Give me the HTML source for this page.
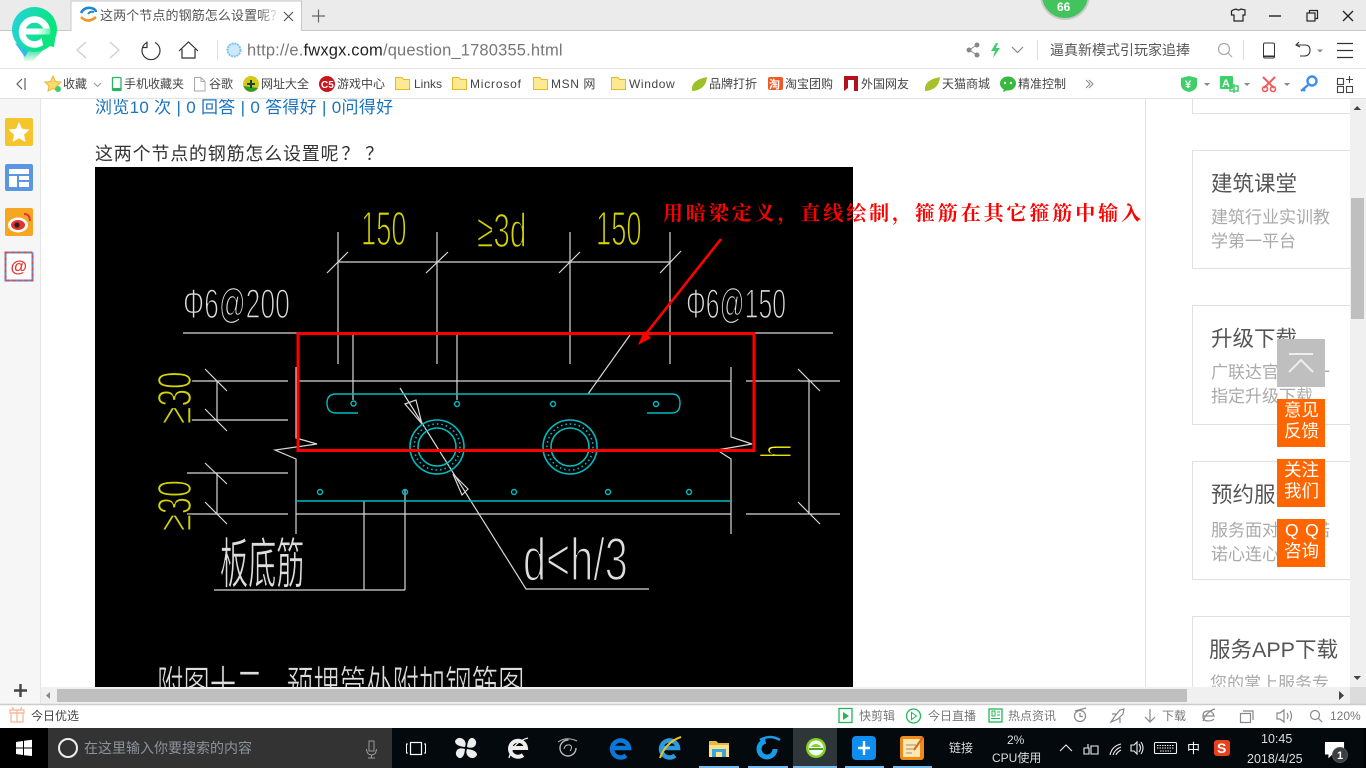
<!DOCTYPE html>
<html lang="zh-CN">
<head>
<meta charset="utf-8">
<title>这两个节点的钢筋怎么设置呢？？</title>
<style>
html,body{margin:0;padding:0;width:1366px;height:768px;overflow:hidden;background:#fff}
svg{display:block;position:absolute;left:0;top:0}
text{font-family:"Liberation Sans","Noto Sans CJK SC",sans-serif;white-space:pre}
.b text{font-size:12px;fill:#444}
.cad{font-family:"Liberation Sans","Noto Sans CJK SC",sans-serif;stroke:#000}
.w{stroke:#d8d8d8;stroke-width:1.2;fill:none}
.c{stroke:#00bcc0;stroke-width:1.4;fill:none}
.i{fill:none;stroke:#444;stroke-width:1.2}
.g{fill:none;stroke:#888;stroke-width:1.2}
.ct{font-size:21.5px;fill:#555}
.cd{font-size:17px;fill:#aaa}
.fl{font-size:17.5px;fill:#fff}
</style>
</head>
<body>
<svg width="1366" height="768" viewBox="0 0 1366 768" xmlns="http://www.w3.org/2000/svg">
<defs>
<linearGradient id="lg" x1="0" y1="0" x2="1" y2="0.3"><stop offset="0" stop-color="#27d2e0"/><stop offset="1" stop-color="#06e676"/></linearGradient>
<linearGradient id="bar" x1="0" y1="0" x2="1" y2="0"><stop offset="0" stop-color="#fff"/><stop offset=".55" stop-color="#fff"/><stop offset="1" stop-color="#5ff0b0"/></linearGradient>
<linearGradient id="tl" x1="0" y1="0" x2="0" y2="1"><stop offset="0" stop-color="#14d88c"/><stop offset="1" stop-color="#e6fbef"/></linearGradient>
<linearGradient id="fade" x1="0" y1="0" x2="1" y2="0"><stop offset="0" stop-color="#fff" stop-opacity="0"/><stop offset="1" stop-color="#fff"/></linearGradient>
<clipPath id="img"><rect x="95" y="167" width="758" height="520"/></clipPath>
</defs>

<!-- page -->
<rect width="1366" height="768" fill="#fff"/>
<text x="95" y="113" font-size="17" fill="#1b74bd" letter-spacing=".3">浏览10 次 | 0 回答 | 0 答得好 | 0问得好</text>
<text x="95" y="160" font-size="18" fill="#333" letter-spacing=".8">这两个节点的钢筋怎么设置呢<tspan dx="2">？</tspan><tspan dx="5">？</tspan></text>

<!-- CAD drawing -->
<rect x="95" y="167" width="758" height="520" fill="#000"/>
<g clip-path="url(#img)">
<g class="w">
<path d="M338 232V364M437 232V364M570 232V364M670 232V364M338 262H670"/>
<path d="M327 273L348 252M426 273L448 252M559 273L580 252M660 273L681 251"/>
<path d="M183 333H298M754 333H833M353 333V400M457 333V400"/>
<path d="M187 381H288M296 381H731M746 381H840M187 420H288M187 473H288M187 514H288M296 514H731M746 514H840"/>
<path d="M296 367V438L317 444L275 450L296 459V534M731 367V437L752 444L717 450L731 459V534"/>
<path d="M217 381V420M205 369L227 391M205 409L227 431M217 473V514M205 463L227 484M205 502L227 524"/>
<path d="M809 381V514M798 369L820 391M798 502L820 524"/>
<path d="M364 501V590M405 490V590M214 590H405"/>
<path d="M588 394L630 335"/>
<path d="M400 388L526 589H649"/>
<path d="M405 404L416 400L422 424ZM453 474L468 489L462 495Z"/>
</g>
<g class="c">
<path d="M358 413H336Q327 413 327 403Q327 394 336 394H672Q680 394 680 403Q680 413 672 413H647"/>
<circle cx="353.500" cy="403.500" r="2.500"/><circle cx="457" cy="404" r="2.500"/><circle cx="553" cy="404" r="2.500"/><circle cx="656" cy="404" r="2.500"/>
<circle cx="320" cy="492" r="2.500"/><circle cx="405" cy="492" r="2.500"/><circle cx="514" cy="492" r="2.500"/><circle cx="608" cy="492" r="2.500"/><circle cx="689" cy="492" r="2.500"/>
<circle cx="437" cy="447" r="27" stroke-width="1.600"/><circle cx="437" cy="447" r="19" stroke-width="1.600"/><circle cx="437" cy="447" r="23" stroke-width="1.600" stroke-dasharray="1.500 3"/>
<circle cx="570" cy="447" r="27" stroke-width="1.600"/><circle cx="570" cy="447" r="19" stroke-width="1.600"/><circle cx="570" cy="447" r="23" stroke-width="1.600" stroke-dasharray="1.500 3"/>
<path d="M296 501H731"/>
</g>
<g fill="#d4d400" class="cad" stroke-width="1.500" font-size="48">
<text class="cad" transform="translate(361,245) scale(.57,1)">150</text>
<text class="cad" transform="translate(596,245) scale(.57,1)">150</text>
<text class="cad" transform="translate(477,247) scale(.62,1)">≥3d</text>
<text class="cad" transform="translate(191,424) rotate(-90) scale(.66,1)">≥30</text>
<text class="cad" transform="translate(191,531) rotate(-90) scale(.64,1)">≥30</text>
<text class="cad" transform="translate(791,458) rotate(-90) scale(.55,1)" font-size="44" fill="#ffff00">h</text>
</g>
<g fill="#ddd" class="cad" stroke-width="1.500">
<text class="cad" transform="translate(183,318) scale(.63,1)" font-size="42">Φ6@200</text>
<text class="cad" transform="translate(686,318) scale(.59,1)" font-size="42">Φ6@150</text>
<text class="cad" transform="translate(523,580) scale(.69,1)" font-size="60" stroke-width="1.800">d&lt;h/3</text>
<text class="cad" transform="translate(220,583) scale(.88,1.7)" font-size="32" stroke-width=".5">板底筋</text>
<text class="cad" transform="translate(157,701) scale(1,1.6)" font-size="26.400" stroke-width=".5" word-spacing="17">附图十二 预埋管处附加钢筋图</text>
</g>
</g>
<rect x="298" y="333.500" width="456" height="117" fill="none" stroke="#f00" stroke-width="3"/>
<path d="M721 239L645 335" stroke="#f00" stroke-width="2.600" fill="none"/>
<path d="M638 345L644 331L651 338Z" fill="#f00"/>
<text x="663" y="220" font-size="20" font-weight="700" fill="#f00" letter-spacing="2.900" style="font-family:'Noto Serif CJK SC','Liberation Serif',serif">用暗梁定义，直线绘制，箍筋在其它箍筋中输入</text>

<!-- right column -->
<path d="M1145.500 99V687" stroke="#e4e4e4"/>
<g fill="#fff" stroke="#e0e0e0">
<path d="M1192.500 99V113.500H1350"/>
<path d="M1350 150.500H1192.500V268.500H1350"/>
<path d="M1350 305.500H1192.500V424.500H1350"/>
<path d="M1350 461.500H1192.500V579.500H1350"/>
<path d="M1350 616.500H1192.500V700H1350"/>
</g>
<text class="ct" x="1211" y="191">建筑课堂</text>
<text class="cd" x="1211" y="223">建筑行业实训教</text>
<text class="cd" x="1211" y="247">学第一平台</text>
<text class="ct" x="1211" y="346">升级下载</text>
<text class="cd" x="1211" y="378">广联达官方唯一</text>
<text class="cd" x="1211" y="402">指定升级下载</text>
<text class="ct" x="1211" y="502">预约服务</text>
<text class="cd" x="1211" y="536">服务面对面承诺</text>
<text class="cd" x="1211" y="560">诺心连心服务</text>
<text class="ct" x="1209" y="657">服务APP下载</text>
<text class="cd" x="1210" y="689">您的掌上服务专</text>

<!-- floating buttons -->
<rect x="1277" y="339" width="48" height="48" fill="#bfbfbf"/>
<path d="M1289 354H1313M1289 372L1301 360L1313 372" stroke="#eee" stroke-width="2" fill="none"/>
<rect x="1277" y="399" width="48" height="48" fill="#f60"/>
<rect x="1277" y="459" width="48" height="48" fill="#f60"/>
<rect x="1277" y="519" width="48" height="48" fill="#f60"/>
<text class="fl" x="1284" y="416">意见</text><text class="fl" x="1284" y="437">反馈</text>
<text class="fl" x="1284" y="476">关注</text><text class="fl" x="1284" y="497">我们</text>
<text class="fl" x="1285" y="536" letter-spacing="6.500">QQ</text><text class="fl" x="1284" y="557">咨询</text>

<!-- scrollbars -->
<rect x="1350" y="99" width="16" height="588" fill="#f0f0f0"/>
<rect x="1351" y="198" width="13" height="121" fill="#bfbfbf"/>
<path d="M1353.500 110H1361L1357.200 106Z" fill="#444"/>
<path d="M1353.500 676H1361L1357.200 680Z" fill="#444"/>
<rect x="40" y="687" width="1310" height="17" fill="#f0f0f0"/>
<rect x="57" y="689" width="1130" height="13" fill="#bfbfbf"/>
<path d="M50 692V699L46 695.500Z" fill="#888"/>
<path d="M1339 691V700L1344 695.500Z" fill="#444"/>
<rect x="1350" y="687" width="16" height="17" fill="#dcdcdc"/>

<!-- left sidebar -->
<rect x="0" y="99" width="40" height="605" fill="#f5f6f5"/>
<path d="M40.500 99V704" stroke="#e4e4e4"/>
<rect x="5" y="118" width="28" height="28" rx="2" fill="#f5c52d"/>
<path d="M19 122L22 128.800L29.500 129.600L24 134.600L25.500 142L19 138.300L12.500 142L14 134.600L8.500 129.600L16 128.800Z" fill="#fff"/>
<rect x="5" y="164" width="28" height="27" rx="2" fill="#5a97e2"/>
<path d="M9 169H29V174H9ZM9 176H17V187H9ZM19 176H29V180H19ZM19 182H29V187H19Z" fill="#fff"/>
<rect x="5" y="208" width="28" height="28" rx="2" fill="#f5a623"/>
<ellipse cx="18" cy="225" rx="10" ry="7.500" fill="#fff"/>
<ellipse cx="18" cy="225" rx="7" ry="5" fill="#e6322e"/>
<circle cx="17" cy="225" r="2.600" fill="#222"/>
<path d="M24 214Q30 214 30 221" stroke="#e6322e" stroke-width="2" fill="none"/>
<rect x="5.500" y="252.500" width="27" height="28" fill="#fff"/>
<rect x="5.500" y="252.500" width="27" height="28" fill="none" stroke="#e64a3c" stroke-width="2" stroke-dasharray="3 3"/>
<rect x="5.500" y="252.500" width="27" height="28" fill="none" stroke="#4a90e2" stroke-width="2" stroke-dasharray="3 3" stroke-dashoffset="3"/>
<text x="10.500" y="272" font-size="17" font-weight="700" fill="#e6322e">@</text>
<rect x="0" y="680" width="40" height="24" fill="#f5f6f5"/>
<path d="M40.500 680V704" stroke="#e4e4e4"/>
<path d="M14 690.500H27M20.500 684V697" stroke="#444" stroke-width="2.400"/>

<!-- status bar -->
<rect x="0" y="704" width="1366" height="24" fill="#fff"/>
<path d="M0 704.500H1366" stroke="#ccc" stroke-width="1.500"/>
<g fill="none" stroke="#f3b596" stroke-width="1.200"><rect x="11" y="713" width="12" height="9"/><path d="M10 710H24V713H10ZM17 710V722M14 710L12 707M20 710L22 707"/></g>
<text x="31" y="720" font-size="12" fill="#444">今日优选</text>
<g fill="none" stroke="#1db954" stroke-width="1.300">
<rect x="839" y="708.500" width="13" height="14" />
<circle cx="913.500" cy="716" r="7"/>
<rect x="989" y="709" width="13" height="13"/>
</g>
<path d="M843 712L849 716L843 720Z" fill="#1db954"/>
<path d="M911.500 712.500L916.500 716L911.500 719.500Z" fill="none" stroke="#1db954"/>
<path d="M992 711V716H995V711ZM997 712H1000M997 715H1000M991 718.500H1000" stroke="#1db954" fill="none"/>
<g font-size="12" fill="#777">
<text x="859" y="720">快剪辑</text><text x="928" y="720">今日直播</text><text x="1008" y="720">热点资讯</text><text x="1162" y="720">下载</text><text x="1330" y="720">120%</text>
</g>
<g class="g" stroke="#777">
<circle cx="1080" cy="716" r="5.500"/><path d="M1080 713V716.500H1083M1075 711L1086 708"/>
<path d="M1111 722L1115 716L1120 710L1124 709L1123 714L1118 719ZM1112 714L1117 714M1120 718V723"/>
<path d="M1150 709V722M1145 717L1150 722L1155 717"/>
<path d="M1203 716H1214Q1213 711 1208 711Q1203 711 1203 716T1208 721Q1212 721 1214 719M1203 721Q1207 711 1215 709"/>
<rect x="1240.500" y="713.500" width="10" height="9"/><path d="M1243 711H1253V720"/>
<path d="M1277 713H1280L1284 710V722L1280 719H1277ZM1287 713Q1289 716 1287 719M1290 711Q1293 716 1290 721"/>
<circle cx="1315" cy="715" r="4.500"/><path d="M1318.500 718.500L1322 722"/>
</g>

<!-- tab bar -->
<rect x="0" y="0" width="1366" height="31" fill="#ebebeb"/>
<path d="M0 30.500H71M301 30.500H1366" stroke="#c8c8c8"/>
<path d="M71 31V1H301.500V31" fill="#fff" stroke="#c8c8c8"/>
<path d="M81 13Q84 7 91 8Q96 9 96 12" stroke="#1e88d2" stroke-width="2.600" fill="none"/>
<path d="M88 14Q90 11 94 12" stroke="#1e88d2" stroke-width="2" fill="none"/>
<path d="M81 17Q88 24 96 17" stroke="#f0952a" stroke-width="2.600" fill="none"/>
<text x="100" y="20" font-size="13" fill="#555" letter-spacing=".1">这两个节点的钢筋怎么设置呢？？</text>
<rect x="260" y="5" width="20" height="20" fill="url(#fade)"/>
<rect x="278" y="5" width="20" height="20" fill="#fff"/>
<path d="M284 12L293 21M293 12L284 21" stroke="#555" stroke-width="1.200"/>
<path d="M312 16H325M318.500 9.500V22.500" stroke="#666" stroke-width="1.200"/>

<!-- window controls -->
<circle cx="1065" cy="-5" r="24" fill="#44c35c" stroke="#c9c9c9" stroke-width="2"/>
<text x="1057" y="11" font-size="12" font-weight="700" fill="#fff">66</text>
<g fill="none" stroke="#222" stroke-width="1.200">
<path d="M1233 10L1236 9Q1238.500 11 1241 9L1245 10V15H1243V21H1234V15H1231.500V11Z"/>
<path d="M1269 16H1281" stroke-width="1.400"/>
<rect x="1307" y="13" width="8" height="8"/><path d="M1309.500 13V10.500H1317.500V18.500H1315"/>
<path d="M1343 11L1353 21M1353 11L1343 21" stroke-width="1.300"/>
</g>

<!-- toolbar -->
<rect x="0" y="31" width="1366" height="37" fill="#fff"/>
<path d="M0 68.500H1366" stroke="#e2e2e2"/>
<path d="M86 42L77 50L86 58M110 42L119 50L110 58" fill="none" stroke="#ccc" stroke-width="1.200"/>
<path d="M147 42A9 9 0 1 0 155 42M147 41V47H142" fill="none" stroke="#333" stroke-width="1.200" transform="translate(0,.5)"/>
<path d="M179 51L188.500 42L198 51M182 49V58H195V49" fill="none" stroke="#333" stroke-width="1.200"/>
<path d="M217.500 40V60M1037.500 40V60M1243.500 40V60" stroke="#ddd"/>
<circle cx="234" cy="50" r="6.500" fill="#cfe9fb" stroke="#7cc3f2" stroke-width="2" stroke-dasharray="2 .8"/>
<text x="247" y="55.500" font-size="16.500" fill="#777" letter-spacing=".165">http://e.<tspan fill="#222">fwxgx.com</tspan>/question_1780355.html</text>
<g fill="#888"><circle cx="969" cy="50" r="2.500"/><circle cx="977" cy="45" r="2.500"/><circle cx="977" cy="55" r="2.500"/></g>
<path d="M969 50L977 45M969 50L977 55" stroke="#888"/>
<path d="M996 43L991 51H995L993 58L1000 48H996L998 43Z" fill="#3ecf6a"/>
<path d="M1012 47L1017.500 52.500L1023 47" class="g" stroke="#aaa"/>
<text x="1050" y="55" font-size="14" fill="#555">逼真新模式引玩家追捧</text>
<circle cx="1224" cy="49" r="5.500" fill="none" stroke="#aaa" stroke-width="1.200"/><path d="M1228 53L1232 57" stroke="#aaa" stroke-width="1.200"/>
<rect x="1263.500" y="43" width="11" height="15" rx="1.500" fill="none" stroke="#333"/><path d="M1264 55.500H1274V57H1264Z" fill="#333"/>
<path d="M1299 42L1296 45L1300 47M1296 45H1305Q1310 45 1310 50Q1310 56 1304 56H1300" fill="none" stroke="#333" stroke-width="1.100"/>
<path d="M1317 49.500H1323L1320 52.500Z" fill="#888"/>
<path d="M1337 43.500H1353M1337 50.500H1353M1337 57.500H1353" stroke="#333" stroke-width="1.200"/>

<!-- logo -->
<path d="M22 46L47 46L33 61H24Z" fill="url(#tl)"/>
<path d="M15 43L25 57L30 48Z" fill="#31b8ee"/>
<circle cx="34.500" cy="29.500" r="22.500" fill="url(#lg)"/>
<circle cx="34.500" cy="32" r="12.500" fill="none" stroke="#fff" stroke-width="6.500"/>
<path d="M41 33.500H56L54 47L43 45Z" fill="#0ce57f"/>
<rect x="22" y="28.500" width="28" height="6" fill="url(#bar)"/>

<!-- bookmarks -->
<rect x="0" y="69" width="1366" height="29" fill="#fff"/>
<path d="M0 98.500H1366" stroke="#e2e2e2"/>
<path d="M22 79L17 84L22 89M25 78V90" fill="none" stroke="#555" stroke-width="1.100"/>
<g class="b">
<text x="63" y="88">收藏</text><text x="124" y="88">手机收藏夹</text><text x="209" y="88">谷歌</text><text x="261" y="88">网址大全</text><text x="337" y="88">游戏中心</text><text x="414" y="88">Links</text><text x="470" y="88" letter-spacing=".8">Microsof</text><text x="551" y="88" letter-spacing=".6">MSN 网</text><text x="629" y="88" letter-spacing=".6">Window</text><text x="709" y="88">品牌打折</text><text x="785" y="88">淘宝团购</text><text x="861" y="88">外国网友</text><text x="942" y="88">天猫商城</text><text x="1018" y="88">精准控制</text>
</g>
<path d="M53 76L55.500 81.500L61 82L57 86L58 91L53 88.500L48 91L49 86L45 82L50.500 81.500Z" fill="#fbd96b" stroke="#e5b83a"/>
<circle cx="58" cy="89" r="3" fill="#3ecf6a"/>
<path d="M94 83L97.500 86.500L101 83" fill="none" stroke="#999"/>
<rect x="112.500" y="77.500" width="8.500" height="13" rx="1" fill="none" stroke="#28b463" stroke-width="1.300"/><rect x="113" y="88" width="8" height="2.500" fill="#28b463"/>
<path d="M194.500 77.500H201L205 81.500V91H194.500ZM201 77.500V81.500H205" fill="#fff" stroke="#aaa"/>
<circle cx="251" cy="84" r="8" fill="#d8c814"/><path d="M243.500 86A8 8 0 0 0 258 88Z" fill="#2c9b2e"/><path d="M247 84H255M251 80V88" stroke="#143" stroke-width="2"/>
<circle cx="327" cy="84" r="8" fill="#c8161d"/><text x="321" y="88" font-size="10" font-weight="700" fill="#fff">C5</text>
<g fill="#fde992" stroke="#e8b82a">
<path d="M395.500 77.500H402L403.500 79.500H409.500V89.500H395.500Z"/>
<path d="M452.500 77.500H459L460.500 79.500H466.500V89.500H452.500Z"/>
<path d="M533.500 77.500H540L541.500 79.500H547.500V89.500H533.500Z"/>
<path d="M611.500 77.500H618L619.500 79.500H625.500V89.500H611.500Z"/>
</g>
<path d="M692 90Q691 80 707 77Q706 90 692 91Z" fill="#9cbf2a"/>
<rect x="768" y="77" width="15" height="13" rx="2" fill="#ee5a24"/><text x="769" y="88" font-size="11" font-weight="700" fill="#fff">淘</text>
<path d="M844 76H858V91H854V80H848V88L844 91Z" fill="#b1121b"/>
<path d="M925 90Q924 80 940 77Q939 90 925 91Z" fill="#a8c02a"/>
<ellipse cx="1008" cy="83.500" rx="8" ry="7" fill="#37b83e"/><path d="M1004 89L1003 92L1008 90Z" fill="#37b83e"/><circle cx="1005" cy="83" r="1.200" fill="#fff"/><circle cx="1011" cy="83" r="1.200" fill="#fff"/>
<path d="M1086 80L1090 84L1086 88M1089 80L1093 84L1089 88" fill="none" stroke="#888"/>
<path d="M1181 78L1189 76L1197 78V85Q1197 90 1189 92Q1181 90 1181 85Z" fill="#3ecf6a"/><text x="1185" y="88" font-size="11" font-weight="700" fill="#fff">¥</text>
<path d="M1204 83H1210L1207 86ZM1244 83H1250L1247 86ZM1284 83H1290L1287 86Z" fill="#888"/>
<rect x="1220" y="76" width="13" height="13" rx="1" fill="#3ecf6a"/><text x="1222" y="87" font-size="11" font-weight="700" fill="#fff">A</text>
<path d="M1230 86H1238V91H1230ZM1234 84V93" fill="none" stroke="#3ecf6a" stroke-width="1.500"/>
<path d="M1263 77L1274 88M1275 77L1264 88" stroke="#f05a5a" stroke-width="2"/><circle cx="1265" cy="89" r="2.500" fill="none" stroke="#f05a5a" stroke-width="1.600"/><circle cx="1273" cy="89" r="2.500" fill="none" stroke="#f05a5a" stroke-width="1.600"/>
<circle cx="1312" cy="81" r="4.500" fill="none" stroke="#3f8cf0" stroke-width="2.400"/><path d="M1308 85L1301 91M1303 89L1305 91" stroke="#3f8cf0" stroke-width="2.400"/>
<g fill="none" stroke="#444" stroke-width="1.100"><rect x="1337.500" y="78.500" width="6" height="6"/><rect x="1337.500" y="86.500" width="6" height="6"/><rect x="1346.500" y="86.500" width="6" height="6"/><path d="M1349.500 76V83M1346 79.500H1353"/></g>

<!-- taskbar -->
<rect x="0" y="728" width="1366" height="40" fill="#03090c"/>
<rect x="0" y="728" width="48" height="40" fill="#000"/>
<rect x="48" y="728" width="344" height="40" fill="#333"/>
<path d="M16 742L23 741V747.500H16ZM24 740.800L32 739.800V747.500H24ZM16 748.500H23V755L16 754ZM24 748.500H32V756L24 755.200Z" fill="#fff"/>
<circle cx="68" cy="748" r="9" fill="none" stroke="#eee" stroke-width="2"/>
<text x="84" y="753" font-size="14" fill="#8c939c">在这里输入你要搜索的内容</text>
<path d="M369 741H374V751H369ZM366.500 749Q367 755 371.500 755Q376 755 376.500 749M371.500 755V758M368 758H375" fill="none" stroke="#999"/>
<rect x="410.500" y="742.500" width="11" height="12" fill="none" stroke="#fff" stroke-width="1.200"/><path d="M408 744H406.500V753H408M424 744H425.500V753H424" fill="none" stroke="#fff"/>
<g fill="#eee"><path d="M465 747Q455 746 455 741Q458 736 463 739Q467 742 465 747Z"/><path d="M467 747Q468 737 473 738Q478 741 475 746Q472 749 467 747Z"/><path d="M467 749Q477 750 477 755Q474 760 469 757Q465 754 467 749Z"/><path d="M465 749Q464 759 459 758Q454 755 457 750Q460 747 465 749Z"/></g>
<path d="M510 748H526A8 8 0 1 0 523 755" fill="none" stroke="#eee" stroke-width="4"/><path d="M509 758Q513 742 528 738" fill="none" stroke="#eee" stroke-width="1.400"/>
<circle cx="568" cy="748" r="8" fill="none" stroke="#bbb" stroke-width="1.400" stroke-dasharray="38 12"/><path d="M564 749Q565 744 570 745Q573 747 570 751" fill="none" stroke="#bbb"/><path d="M558 742Q566 736 577 741" fill="none" stroke="#bbb"/>
<path d="M613 748H629A8.500 8.500 0 1 0 626 755.500" fill="none" stroke="#0a78d7" stroke-width="4.500"/>
<path d="M662 748H678A8.500 8.500 0 1 0 675 755.500" fill="none" stroke="#2a9be0" stroke-width="4.500"/><path d="M660 758Q666 742 681 737" fill="none" stroke="#e8c228" stroke-width="2"/>
<path d="M709 741H716L718 743H729V757H709Z" fill="#fce28b"/><path d="M709 741H716L718 743H729V745H709Z" fill="#e6b93c"/><path d="M716 757V752H722V757H726V749H712V757Z" fill="#3aa6e0"/>
<circle cx="767" cy="749" r="8" fill="none" stroke="#1a9be8" stroke-width="5" stroke-dasharray="36 14"/><path d="M760 740Q770 734 780 740" fill="none" stroke="#1a9be8" stroke-width="2.400"/>
<rect x="793" y="728" width="44" height="40" fill="#2f3639"/>
<circle cx="816" cy="748" r="10" fill="#7ed321"/><circle cx="816" cy="748" r="7.500" fill="#fff"/><path d="M809 748H823V750H809Z" fill="#4aa82a"/><path d="M811 747A5.500 5 0 0 1 821 747Z" fill="#7ed321"/>
<rect x="852" y="736" width="24" height="24" rx="4" fill="#0f8ef0"/><path d="M864 741V755M858 748H870" stroke="#fff" stroke-width="2.400"/><circle cx="864" cy="748" r="2" fill="#fff"/>
<rect x="900" y="736" width="24" height="24" rx="3" fill="#f08a1d"/><rect x="903" y="739" width="17" height="18" fill="#fde9b0"/><path d="M906 745H916M906 749H916M906 753H912" stroke="#a88"/><path d="M914 750L923 737" stroke="#d2691e" stroke-width="2"/>
<g fill="#76b9ed"><rect x="699" y="766" width="40" height="2"/><rect x="748" y="766" width="40" height="2"/><rect x="793" y="766" width="44" height="2"/><rect x="845" y="766" width="39" height="2"/><rect x="893" y="766" width="39" height="2"/></g>
<g fill="#ddd">
<text x="949" y="752" font-size="12">链接</text>
<text x="1007" y="744" font-size="12">2%</text>
<text x="992" y="762" font-size="12">CPU使用</text>
<text x="1187" y="753" font-size="13" fill="#fff">中</text>
<text x="1261" y="743" font-size="12.500">10:45</text>
<text x="1247" y="763" font-size="12.500">2018/4/25</text>
</g>
<g fill="none" stroke="#eee" stroke-width="1.100">
<path d="M1060 751L1066 745L1072 751"/>
<path d="M1088 744V748M1084 748H1089V754H1084ZM1091 746H1098V754H1091Z"/>
<path d="M1110 755Q1112 746 1121 744M1113 755Q1115 749 1121 747M1116 755Q1117 752 1121 750"/>
<path d="M1131 745H1134L1137 742V754L1134 751H1131ZM1139 744Q1142 748 1139 752M1141 742Q1145 748 1141 754"/>
<rect x="1154.500" y="742.500" width="22" height="11" rx="1"/><path d="M1157 745.500H1174M1157 748H1174M1160 751H1171" stroke-dasharray="1.500 1"/>
<path d="M1325.500 742.500H1343.500V754H1332L1329 757V754H1325.500ZM1328 746H1341M1328 750H1338" stroke="#fff" fill="#fff"/>
</g>
<rect x="1214" y="740" width="16" height="16" rx="3" fill="#e8421c"/><text x="1217" y="753" font-size="14" font-weight="700" fill="#fff">S</text>
<circle cx="1340" cy="755" r="7.500" fill="#3c3f41" stroke="#555"/><text x="1337" y="759" font-size="11" font-weight="700" fill="#fff">1</text>
<rect x="1364" y="728" width="2" height="40" fill="#000"/>
</svg>
</body>
</html>
